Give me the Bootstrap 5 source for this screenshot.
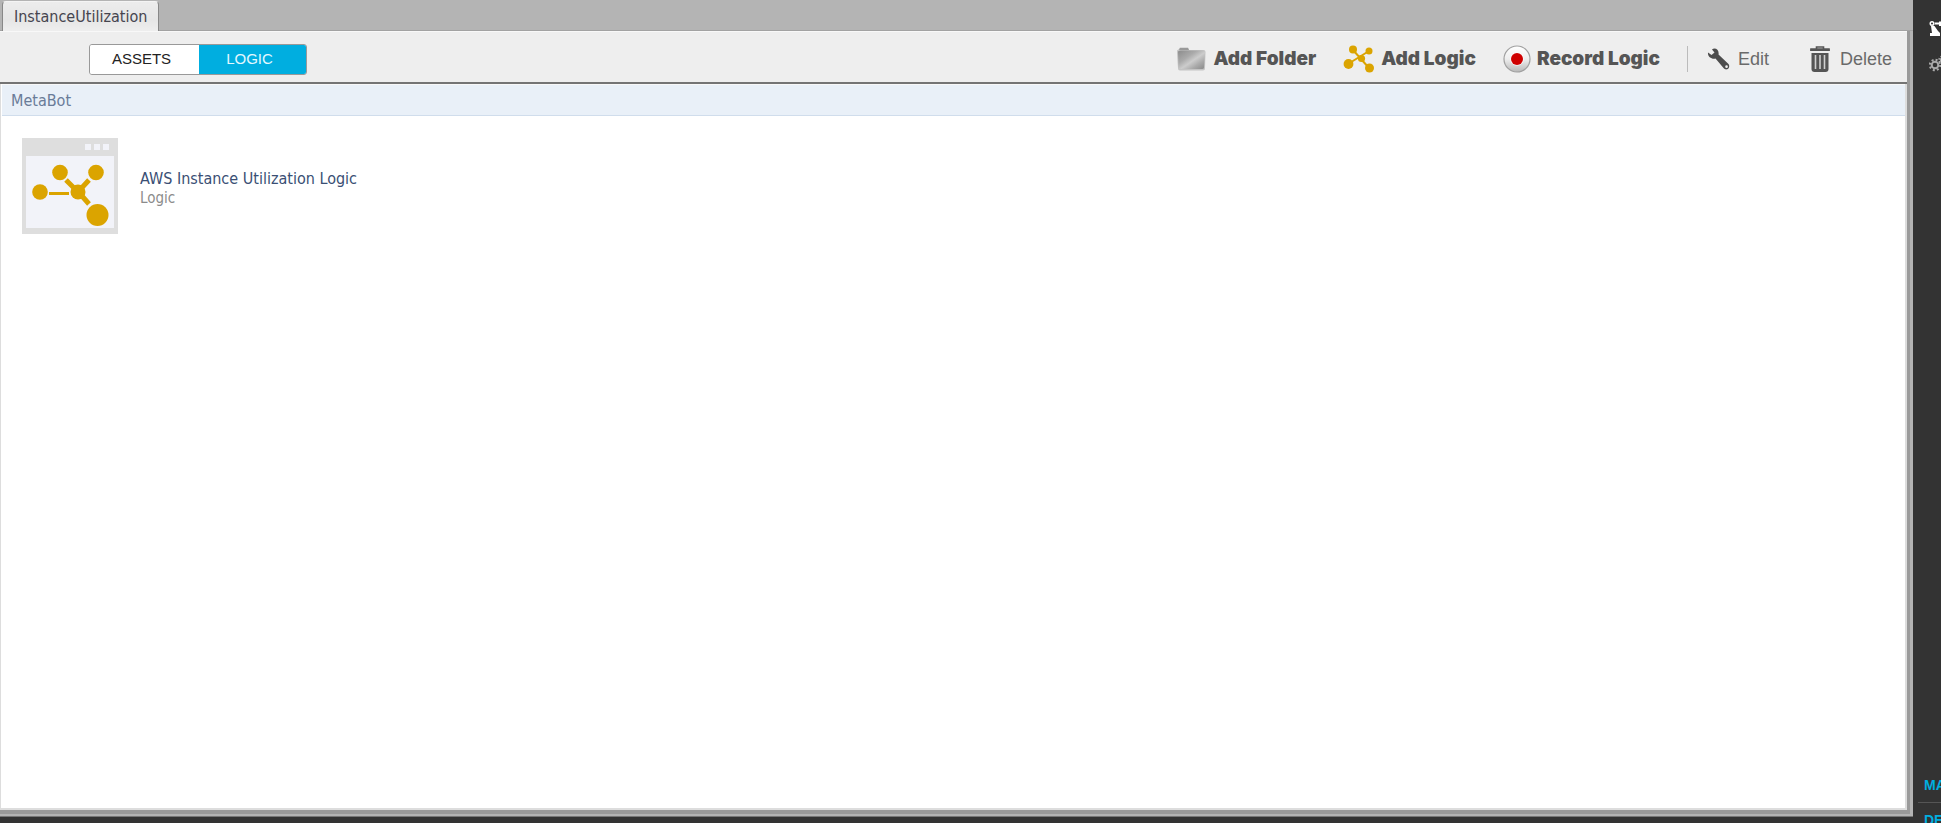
<!DOCTYPE html>
<html lang="en">
<head>
<meta charset="utf-8">
<meta name="viewport" content="width=device-width, initial-scale=1">
<title>InstanceUtilization</title>
<link rel="stylesheet" href="https://cdn.jsdelivr.net/npm/bootstrap@5.3.0/dist/css/bootstrap.min.css">
<style>
:root { --dark: #333; --gold: #dba400; --cyan: #00aee0; }
body { background: var(--dark); font-family: "DejaVu Sans Condensed", "DejaVu Sans", sans-serif; font-stretch: condensed; font-size: 16px; line-height: 20px; }
button { font: inherit; }
.workspace { background: #b4b4b4; border-bottom: 1px solid #777; margin-bottom: 6px; min-width: 0; }
.tab-strip { height: 31px; padding: 1px 3px 0 2px; border-bottom: 1px solid #a2a2a2; }
.doc-tab { height: 30px; padding: 0 11px; background: linear-gradient(#ececec, #e6e6e6 60%, #eee); color: #45454f; border: 1px solid #888; border-top-color: #f4f4f4; border-bottom: 0; border-radius: 4px 4px 0 0; }
.panel { margin-right: 3px; border-right: 3px solid #9a9a9a; border-bottom: 4px solid #9a9a9a; margin-bottom: 2px; }
.toolbar { height: 53px; background: #eee; border-top: 1px solid #f8f8f8; border-bottom: 2px solid #747474; padding: 4px 15px 0 89px; }
.switch { border: 1px solid #999; border-radius: 3px; overflow: hidden; height: 31px; }
.switch button { border: 0; width: 109px; background: #fff; color: #222; font: 15px/20px "Liberation Sans", Arial, sans-serif; padding: 0 8px 0 2px; }
.switch .active { width: 107px; background: var(--cyan); color: #e4f8ff; }
.tool { display: flex; align-items: center; gap: 8px; border: 0; background: none; padding: 0; color: #6a6a6a; font: 18px/24px "Liberation Sans", Arial, sans-serif; }
.tool svg { flex: none; }
.tool-strong { gap: 6px; margin-right: 27px; color: #555; font: 900 19px/24px Inter, sans-serif; }
.tool-last { margin-left: 41px; gap: 10px; }
.divider { width: 1px; height: 26px; background: #bbb; margin-right: 19px; }
.crumb { height: 32px; margin-left: 1px; padding: 6px 9px; background: #e9f0f8; border-top: 1px solid #f8f8f8; border-bottom: 1px solid #d0ddec; color: #6a7c98; }
.content { background: #fff; border-left: 1px solid #ddd; border-right: 2px solid #ddd; border-bottom: 2px solid #ddd; }
.entry { display: flex; align-items: center; gap: 22px; padding: 22px 21px; color: #3a4f74; text-decoration: none; }
.entry-kind { font-size: 15px; line-height: 18px; color: #8b8b8b; }
.side { width: 28px; overflow: hidden; }
.side a { color: var(--cyan); font: bold 14px/20px "Liberation Sans", Arial, sans-serif; text-decoration: none; white-space: nowrap; }
.side-tools { padding: 20px 0 0 16px; gap: 18px; }
.side-tools svg { display: block; }
.side-links a { height: 27px; padding-left: 11px; }
.side-links a + a { border-top: 1px solid #555; margin-left: 5px; padding: 7px 0 0 6px; height: 21px; }
</style>
</head>
<body class="vh-100 overflow-hidden d-flex">
<main class="workspace flex-fill d-flex flex-column">
  <div class="tab-strip d-flex"><button class="doc-tab" type="button">InstanceUtilization</button></div>
  <section class="panel flex-fill d-flex flex-column">
    <div class="toolbar d-flex align-items-center">
      <div class="switch d-flex me-auto" role="group" aria-label="View"><button type="button">ASSETS</button><button type="button" class="active" aria-pressed="true">LOGIC</button></div>
      <button class="tool tool-strong" type="button">
        <svg width="31" height="28" viewBox="0 0 31 28" aria-hidden="true">
          <defs><linearGradient id="folderFill" x1="0" y1="0" x2="1" y2="1"><stop offset="0" stop-color="#8c8c8c"/><stop offset=".35" stop-color="#aaa"/><stop offset=".55" stop-color="#ccc"/><stop offset=".75" stop-color="#aaa"/><stop offset="1" stop-color="#888"/></linearGradient></defs>
          <path d="M1 5.500 3 4 4 2.500h8L13 5h14.500q2 0 2 2L29 23.500q0 2-2 2H4q-2 0-2-2L1 8z" fill="#c4c4c4"/>
          <path d="M4 3h8l1 2H3z" fill="#999"/>
          <path d="M2 6.500q1-1 3-1h22q2 0 2 2L28 22.500q0 1.500-2 1.500H4.500q-2 0-2-2z" fill="url(#folderFill)"/>
        </svg>Add Folder</button>
      <button class="tool tool-strong" type="button">
        <svg width="32" height="28" viewBox="0 0 32 28" fill="#dba400" stroke="#dba400" aria-hidden="true">
          <path d="M10 5 26 23M26 6 5 19" stroke-width="2"/>
          <g stroke="none"><circle cx="10" cy="4.500" r="4"/><circle cx="26" cy="6" r="3.500"/><circle cx="5.500" cy="19" r="4.900"/><circle cx="26.500" cy="23" r="4.500"/><circle cx="18.500" cy="13.500" r="3.600"/></g>
        </svg>Add Logic</button>
      <button class="tool tool-strong" type="button">
        <svg width="28" height="28" viewBox="0 0 28 28" aria-hidden="true">
          <defs><linearGradient id="recFill" x1="0" y1="0" x2="0" y2="1"><stop offset="0" stop-color="#fff"/><stop offset=".5" stop-color="#eee"/><stop offset="1" stop-color="#b8b8b8"/></linearGradient></defs>
          <circle cx="14" cy="14" r="13" fill="url(#recFill)" stroke="#a0a0a0" stroke-width="1.200"/>
          <circle cx="14" cy="14" r="6.800" fill="#fff" opacity=".7"/><circle cx="14" cy="14" r="6" fill="#cf0000"/>
        </svg>Record Logic</button>
      <span class="divider"></span>
      <button class="tool" type="button">
        <svg width="23" height="24" viewBox="0 0 23 24" fill="#4c4c4c" aria-hidden="true">
          <path fill-rule="evenodd" d="M5 2.500C8-.300 12.500 3 11.500 7.500L21.500 17C23 19 22 22 20 22.300 18.500 22.600 17.300 22 16.500 21L8.500 11.500C4.500 12.500 .500 9.500 1 5.500L4.500 8 7.500 5.500zM19.500 18.300a1.300 1.300 0 1 0 .1 2.600 1.300 1.300 0 0 0-.1-2.600z"/>
        </svg>Edit</button>
      <button class="tool tool-last" type="button">
        <svg width="20" height="28" viewBox="0 0 20 28" fill="none" stroke="#555" aria-hidden="true">
          <path d="M6.500 3.500V2h7v1.500M1 6V4h18v2" stroke-width="1.600"/>
          <path d="M.500 5h19" stroke-width="2"/>
          <path d="M1.500 8h17v16q0 3-3 3h-11q-3 0-3-3z" fill="#555" stroke="none"/>
          <path d="M5.500 10v14M10 10v14M14.500 10v14" stroke="#d0d0d0" stroke-width="1.600"/>
        </svg>Delete</button>
    </div>
    <div class="content flex-fill">
      <div class="crumb">MetaBot</div>
      <a class="entry" href="#">
        <svg width="96" height="96" viewBox="0 0 96 96" aria-hidden="true">
          <path d="M0 0h96v96H0z" fill="#dedede"/><path d="M4 18h88v72H4z" fill="#f2f3f9"/>
          <path d="M63 6h6v6h-6zM72 6h6v6h-6zM81 6h6v6h-6z" fill="#f2f3f9"/>
          <path d="M44 42 56 54 67 42M60 58l7 8" fill="none" stroke="#dba400" stroke-width="5"/>
          <path d="M27 55.500h20" stroke="#dba400" stroke-width="3"/>
          <g fill="#dba400"><circle cx="38" cy="34.500" r="7.800"/><circle cx="74" cy="34.500" r="7.800"/><circle cx="18" cy="54" r="7.800"/><circle cx="56" cy="54" r="7.500"/><circle cx="75.500" cy="77" r="11"/></g>
        </svg>
        <span class="d-flex flex-column pt-1"><span>AWS Instance Utilization Logic</span><span class="entry-kind">Logic</span></span>
      </a>
    </div>
  </section>
</main>
<aside class="side d-flex flex-column">
  <nav class="side-tools d-flex flex-column" aria-label="Tools">
    <a href="#" aria-label="Bots"><svg width="24" height="17" viewBox="0 0 24 17" fill="#fff">
      <path fill-rule="evenodd" d="M3 1a2.500 2.500 0 1 0 0 5 2.500 2.500 0 0 0 0-5zm0 1.500a1 1 0 1 1 0 2 1 1 0 0 1 0-2zM5 2.500h5v2H5zM10 1.500h4V6h-4zM2 6h3.500L9 11l2 2v3H1v-3h2z"/></svg></a>
    <a href="#" aria-label="Settings"><svg width="26" height="18" viewBox="0 0 26 18" fill="none" stroke="#aaa">
      <circle cx="6" cy="10" r="5.200" stroke-width="2" stroke-dasharray="2 2.080"/><circle cx="6" cy="10" r="3.300" stroke-width="2"/>
      <circle cx="14" cy="5" r="3.800" stroke-width="2" stroke-dasharray="1.500 1.500"/><circle cx="14" cy="5" r="2.300" stroke-width="1.500"/></svg></a>
  </nav>
  <nav class="side-links mt-auto d-flex flex-column" aria-label="Sections"><a href="#">MANAGE</a><a href="#">DESIGN</a></nav>
</aside>
<script src="https://cdn.jsdelivr.net/npm/bootstrap@5.3.0/dist/js/bootstrap.bundle.min.js"></script>
</body>
</html>
